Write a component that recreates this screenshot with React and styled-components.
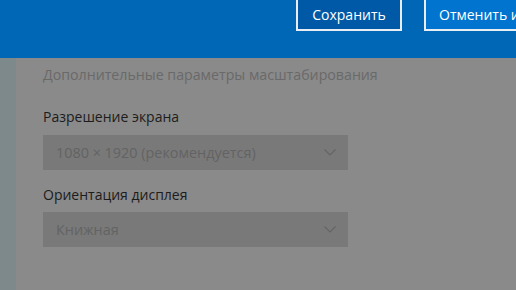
import styled, { createGlobalStyle } from "styled-components";

const GlobalStyle = createGlobalStyle`
  html, body {
    margin: 0;
    padding: 0;
    background: #8a8a8a;
  }
  body {
    font-family: "Open Sans", "Noto Sans", sans-serif;
  }
`;

const Screen = styled.div`
  width: 516px;
  height: 290px;
  overflow: hidden;
  display: flex;
  flex-direction: column;
  background: #8a8a8a;
`;

const TopBar = styled.div`
  height: 58px;
  flex-shrink: 0;
  background: #0066b6;
  display: flex;
  align-items: flex-start;
  justify-content: flex-end;
  gap: 22px;
  margin-right: -118px;
`;

const BarButton = styled.button`
  height: 34px;
  margin-top: -3px;
  padding: 0 13px;
  border: 2px solid #e9eef4;
  background: ${({ $primary }) => ($primary ? "#0059a6" : "#0074cf")};
  color: #ffffff;
  font-family: inherit;
  font-size: 14px;
  white-space: nowrap;
  width: ${({ $wide }) => ($wide ? "210px" : "106px")};
  text-align: ${({ $wide }) => ($wide ? "left" : "center")};
`;

const Body = styled.div`
  flex: 1;
  display: flex;
`;

const SideStrip = styled.div`
  width: 16px;
  background: #7e898b;
`;

const Content = styled.div`
  flex: 1;
  padding: 7px 0 0 27px;
  display: flex;
  flex-direction: column;
`;

const Hint = styled.div`
  font-size: 14.2px;
  line-height: 20px;
  color: #696969;
  margin-bottom: 22px;
`;

const Label = styled.div`
  font-size: 14px;
  line-height: 20px;
  color: #1c1c1c;
  margin-bottom: ${({ $gap }) => $gap}px;
`;

const Select = styled.div`
  width: 305px;
  height: 35px;
  box-sizing: border-box;
  background: #797979;
  display: flex;
  align-items: center;
  justify-content: space-between;
  padding: 0 12px 0 13px;
  color: #636363;
  font-size: 14.4px;
  margin-bottom: ${({ $gap }) => $gap}px;
`;

const Chevron = () => (
  <svg width="12" height="7" viewBox="0 0 12 7">
    <path d="M0.5 0.5 L6 6 L11.5 0.5" fill="none" stroke="#646464" strokeWidth="1.1" />
  </svg>
);

export default function App() {
  return (
    <>
      <GlobalStyle />
      <Screen>
        <TopBar>
          <BarButton $primary>Сохранить</BarButton>
          <BarButton $wide>Отменить изменения</BarButton>
        </TopBar>
        <Body>
          <SideStrip />
          <Content>
            <Hint>Дополнительные параметры масштабирования</Hint>
            <Label $gap={8}>Разрешение экрана</Label>
            <Select $gap={15}>
              <span>1080 × 1920 (рекомендуется)</span>
              <Chevron />
            </Select>
            <Label $gap={7}>Ориентация дисплея</Label>
            <Select $gap={0}>
              <span>Книжная</span>
              <Chevron />
            </Select>
          </Content>
        </Body>
      </Screen>
    </>
  );
}
